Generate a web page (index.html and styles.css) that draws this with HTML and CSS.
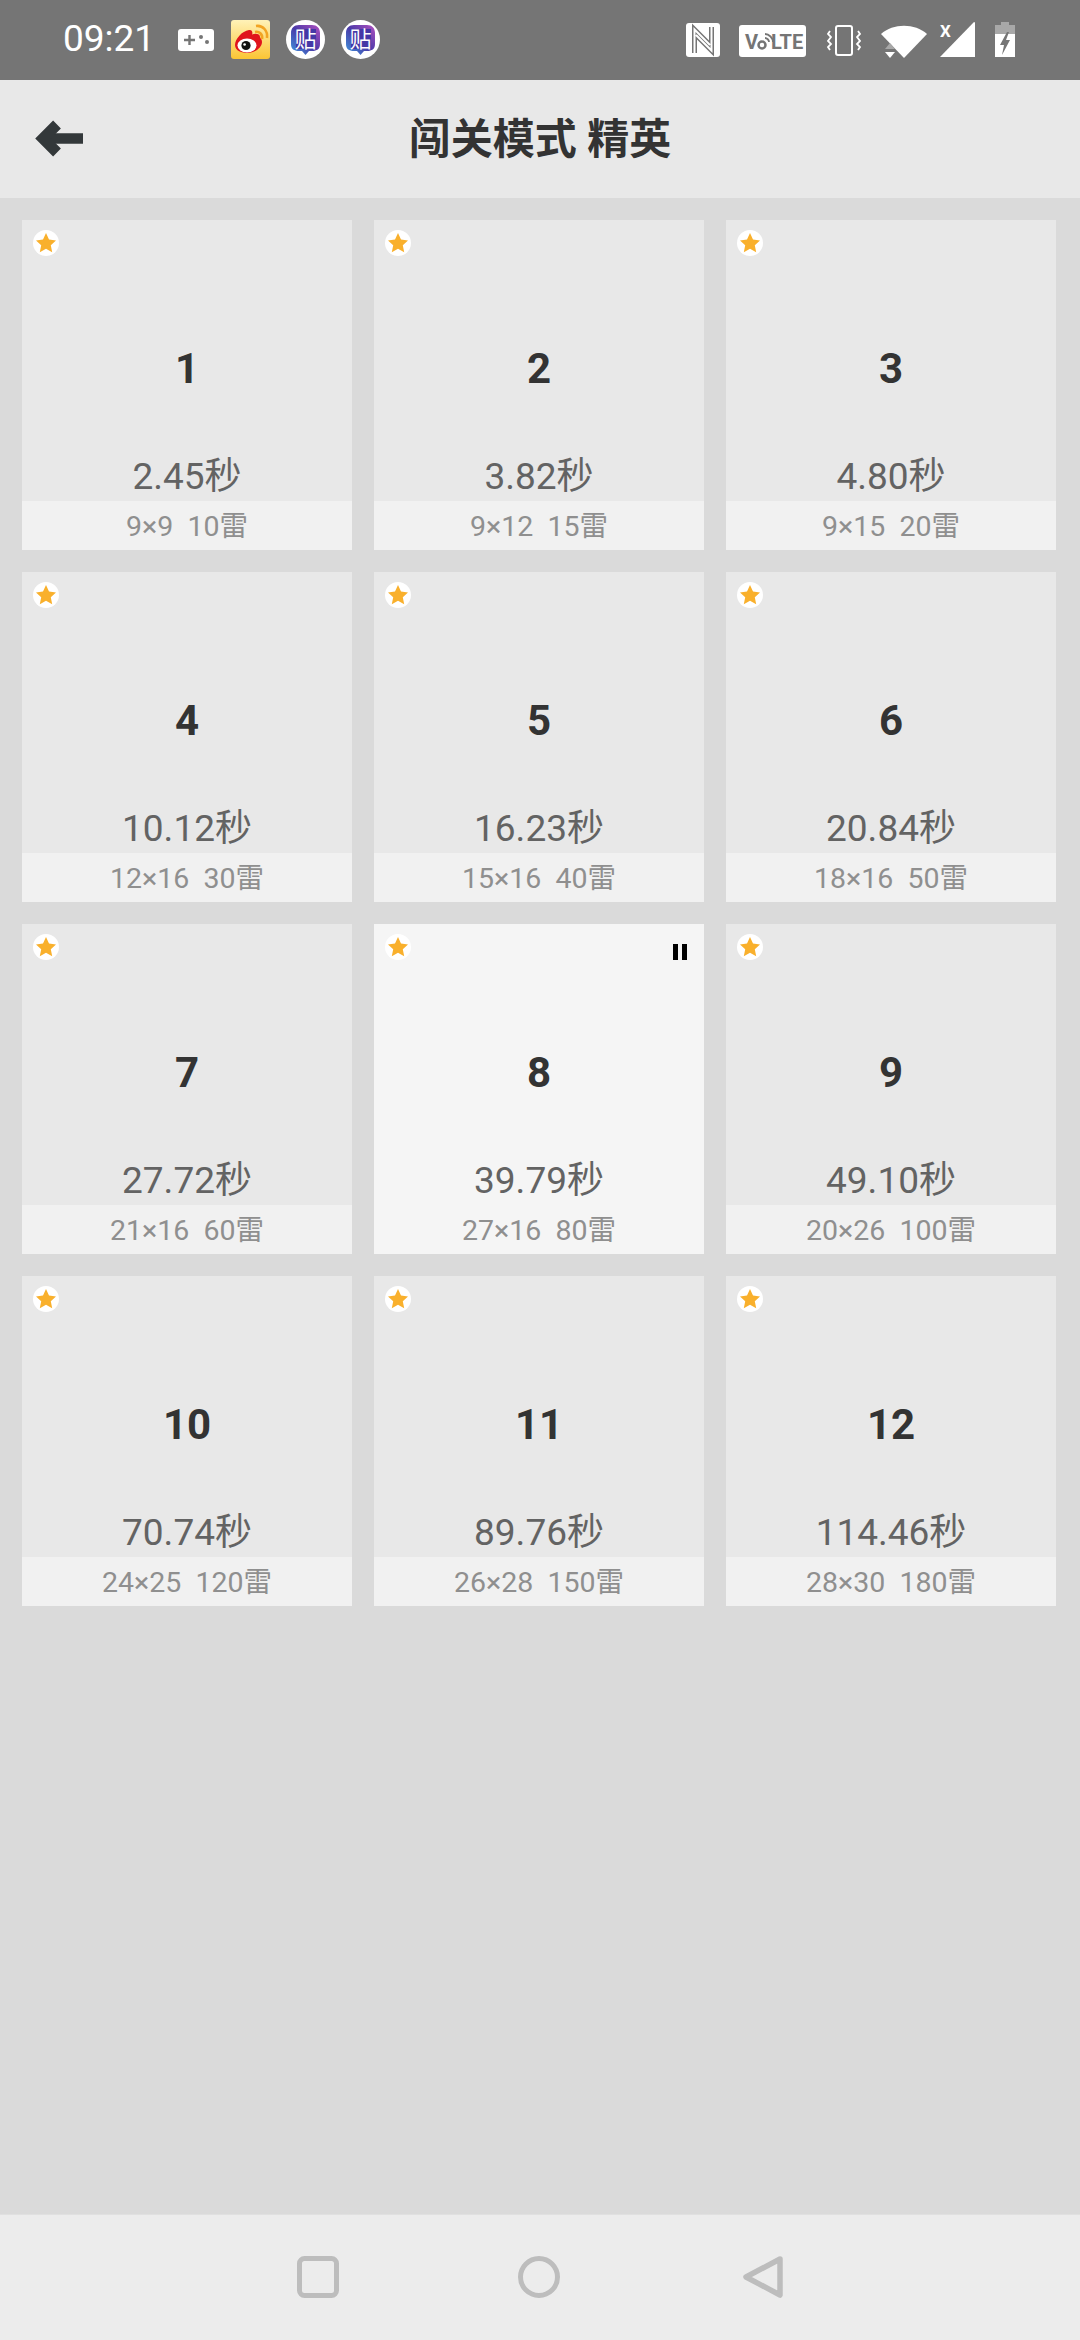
FILE: index.html
```html
<!DOCTYPE html>
<html lang="zh">
<head>
<meta charset="utf-8">
<title>闯关模式 精英</title>
<link rel="stylesheet" href="styles.css">
</head>
<body>
<div class="screen">
  <header class="status">
    <div class="status-left">
      <span class="clock">09:21</span>
      <svg class="ic-game" viewBox="0 0 36 22"><rect width="36" height="22" rx="3" fill="#fff"/><path d="M6 11h11M11.500 6v10" stroke="#757575" stroke-width="2.400"/><circle cx="23" cy="8" r="2" fill="#757575"/><circle cx="29" cy="13" r="2" fill="#757575"/></svg>
      <svg class="ic-weibo" viewBox="0 0 39 39"><defs><linearGradient id="wb" x1="0" y1="0" x2="0" y2="1"><stop offset="0" stop-color="#fff2b8"/><stop offset="1" stop-color="#fbc534"/></linearGradient></defs><rect width="39" height="39" rx="3" fill="url(#wb)"/><path d="M4 25c0-6 7-14 14-15 3-.5 4 2 3 4.500 4-1.500 8-.5 8 2.500 0 1 2 2 2 5 0 6-8 11-14 11S4 31 4 25z" fill="#e0141c"/><ellipse cx="16" cy="25.500" rx="9.500" ry="7" fill="#fff"/><circle cx="15" cy="25.500" r="4.600" fill="#111"/><circle cx="13.600" cy="24.500" r="1.300" fill="#fff"/><path d="M24 12c4-1 8 2 7 7M25 6c7-1 12 5 11 12" fill="none" stroke="#f2a423" stroke-width="2.600"/></svg>
      <svg class="ic-tie" viewBox="0 0 39 39"><defs><linearGradient id="tb" x1="0" y1="1" x2="1" y2="0"><stop offset="0" stop-color="#3f9ce0"/><stop offset=".5" stop-color="#4a3aa8"/><stop offset="1" stop-color="#b04fc0"/></linearGradient></defs><circle cx="19.500" cy="19.500" r="19.500" fill="#fff"/><path d="M13 5h13c5 0 8 3 8 8v11c0 5-3 7-8 7h-3l-3.500 4-3.500-4h-3c-5 0-8-2-8-7V13c0-5 3-8 8-8z" fill="url(#tb)"/><path d="M10 9h20v20H10z" fill="#4538a6"/><text x="19.500" y="27" class="tie-text">贴</text></svg>
      <svg class="ic-tie" viewBox="0 0 39 39"><circle cx="19.500" cy="19.500" r="19.500" fill="#fff"/><path d="M13 5h13c5 0 8 3 8 8v11c0 5-3 7-8 7h-3l-3.500 4-3.500-4h-3c-5 0-8-2-8-7V13c0-5 3-8 8-8z" fill="url(#tb)"/><path d="M10 9h20v20H10z" fill="#4538a6"/><text x="19.500" y="27" class="tie-text">贴</text></svg>
    </div>
    <div class="status-right">
      <svg class="ic-nfc" viewBox="0 0 34 34"><rect width="34" height="34" rx="3" fill="#fff"/><path d="M8.500 30V6.500L24 22M25.500 4v23.500L10 12" fill="none" stroke="#757575" stroke-width="5"/><path d="M8.500 30V6.500L24 22M25.500 4v23.500L10 12" fill="none" stroke="#fff" stroke-width="2"/></svg>
      <svg class="ic-volte" viewBox="0 0 67 32"><rect width="67" height="32" rx="3" fill="#fff"/><text x="6" y="24" class="volte-text">V</text><circle cx="23" cy="20" r="3.500" fill="none" stroke="#757575" stroke-width="2.500"/><path d="M26 13c2 0 4 2 4 4M26 9c4 0 8 4 8 8" fill="none" stroke="#757575" stroke-width="1.800"/><text x="32" y="24" class="volte-text">LTE</text></svg>
      <svg class="ic-vib" viewBox="0 0 36 31"><rect x="10" y="1" width="16" height="29" rx="2" fill="none" stroke="#fff" stroke-width="2"/><path d="M4 6l-2 3 3 3-3 4 3 3-3 3 2 3M32 6l2 3-3 3 3 4-3 3 3 3-2 3" fill="none" stroke="#fff" stroke-width="1.800"/></svg>
      <svg class="ic-wifi" viewBox="0 0 48 36"><path d="M24 35L1 11C13 0 35 0 47 11z" fill="#fff"/><path d="M5 26h10l-5-6z" fill="#a8a8a8"/><path d="M5 29h10l-5 6z" fill="#fff"/></svg>
      <svg class="ic-signal" viewBox="0 0 35 36"><path d="M34 0a1 1 0 0 1 1 1v34H0z" fill="#fff"/><text x="0" y="15" class="x-text">X</text></svg>
      <svg class="ic-batt" viewBox="0 0 20 35"><path d="M6 0h8v3h6v9H0V3h6z" fill="#a8a8a8"/><path d="M0 12h20v23H0z" fill="#fff"/><path d="M12 10L5 23h4l-2 10 8-15h-4l3-8z" fill="#757575"/></svg>
    </div>
  </header>

  <div class="appbar">
    <svg class="back" viewBox="0 0 48 38"><path d="M48 18.500H8" stroke="#33383a" stroke-width="10.500"/><path d="M22 4.500L8 18.500 22 32.500" fill="none" stroke="#33383a" stroke-width="11"/></svg>
    <h1 class="title">闯关模式 精英</h1>
  </div>

  <main class="levels">
    <section class="card"><span class="badge"><svg viewBox="0 0 26 26"><path class="star" d="M13 3l3 6.600 7 .8-5.200 4.800 1.400 7L13 18.700 6.800 22.200l1.400-7L3 10.400l7-.8z"/></svg></span><div class="body"><div class="num">1</div><div class="time">2.45秒</div></div><div class="info">9×9&nbsp;&nbsp;10雷</div></section>
    <section class="card"><span class="badge"><svg viewBox="0 0 26 26"><path class="star" d="M13 3l3 6.600 7 .8-5.200 4.800 1.400 7L13 18.700 6.800 22.200l1.400-7L3 10.400l7-.8z"/></svg></span><div class="body"><div class="num">2</div><div class="time">3.82秒</div></div><div class="info">9×12&nbsp;&nbsp;15雷</div></section>
    <section class="card"><span class="badge"><svg viewBox="0 0 26 26"><path class="star" d="M13 3l3 6.600 7 .8-5.200 4.800 1.400 7L13 18.700 6.800 22.200l1.400-7L3 10.400l7-.8z"/></svg></span><div class="body"><div class="num">3</div><div class="time">4.80秒</div></div><div class="info">9×15&nbsp;&nbsp;20雷</div></section>
    <section class="card"><span class="badge"><svg viewBox="0 0 26 26"><path class="star" d="M13 3l3 6.600 7 .8-5.200 4.800 1.400 7L13 18.700 6.800 22.200l1.400-7L3 10.400l7-.8z"/></svg></span><div class="body"><div class="num">4</div><div class="time">10.12秒</div></div><div class="info">12×16&nbsp;&nbsp;30雷</div></section>
    <section class="card"><span class="badge"><svg viewBox="0 0 26 26"><path class="star" d="M13 3l3 6.600 7 .8-5.200 4.800 1.400 7L13 18.700 6.800 22.200l1.400-7L3 10.400l7-.8z"/></svg></span><div class="body"><div class="num">5</div><div class="time">16.23秒</div></div><div class="info">15×16&nbsp;&nbsp;40雷</div></section>
    <section class="card"><span class="badge"><svg viewBox="0 0 26 26"><path class="star" d="M13 3l3 6.600 7 .8-5.200 4.800 1.400 7L13 18.700 6.800 22.200l1.400-7L3 10.400l7-.8z"/></svg></span><div class="body"><div class="num">6</div><div class="time">20.84秒</div></div><div class="info">18×16&nbsp;&nbsp;50雷</div></section>
    <section class="card"><span class="badge"><svg viewBox="0 0 26 26"><path class="star" d="M13 3l3 6.600 7 .8-5.200 4.800 1.400 7L13 18.700 6.800 22.200l1.400-7L3 10.400l7-.8z"/></svg></span><div class="body"><div class="num">7</div><div class="time">27.72秒</div></div><div class="info">21×16&nbsp;&nbsp;60雷</div></section>
    <section class="card current"><span class="badge"><svg viewBox="0 0 26 26"><path class="star" d="M13 3l3 6.600 7 .8-5.200 4.800 1.400 7L13 18.700 6.800 22.200l1.400-7L3 10.400l7-.8z"/></svg></span><span class="pause"></span><div class="body"><div class="num">8</div><div class="time">39.79秒</div></div><div class="info">27×16&nbsp;&nbsp;80雷</div></section>
    <section class="card"><span class="badge"><svg viewBox="0 0 26 26"><path class="star" d="M13 3l3 6.600 7 .8-5.200 4.800 1.400 7L13 18.700 6.800 22.200l1.400-7L3 10.400l7-.8z"/></svg></span><div class="body"><div class="num">9</div><div class="time">49.10秒</div></div><div class="info">20×26&nbsp;&nbsp;100雷</div></section>
    <section class="card"><span class="badge"><svg viewBox="0 0 26 26"><path class="star" d="M13 3l3 6.600 7 .8-5.200 4.800 1.400 7L13 18.700 6.800 22.200l1.400-7L3 10.400l7-.8z"/></svg></span><div class="body"><div class="num">10</div><div class="time">70.74秒</div></div><div class="info">24×25&nbsp;&nbsp;120雷</div></section>
    <section class="card"><span class="badge"><svg viewBox="0 0 26 26"><path class="star" d="M13 3l3 6.600 7 .8-5.200 4.800 1.400 7L13 18.700 6.800 22.200l1.400-7L3 10.400l7-.8z"/></svg></span><div class="body"><div class="num">11</div><div class="time">89.76秒</div></div><div class="info">26×28&nbsp;&nbsp;150雷</div></section>
    <section class="card"><span class="badge"><svg viewBox="0 0 26 26"><path class="star" d="M13 3l3 6.600 7 .8-5.200 4.800 1.400 7L13 18.700 6.800 22.200l1.400-7L3 10.400l7-.8z"/></svg></span><div class="body"><div class="num">12</div><div class="time">114.46秒</div></div><div class="info">28×30&nbsp;&nbsp;180雷</div></section>
  </main>

  <nav class="navbar">
    <svg class="nav-ic" viewBox="0 0 42 42"><rect x="2.500" y="2.500" width="37" height="37" rx="5" fill="none" stroke="#bdbdbd" stroke-width="5"/></svg>
    <svg class="nav-ic" viewBox="0 0 42 42"><circle cx="21" cy="21" r="18.500" fill="none" stroke="#bdbdbd" stroke-width="5"/></svg>
    <svg class="nav-ic tri" viewBox="0 0 42 42"><path d="M38 3L4 21 38 39z" fill="none" stroke="#bdbdbd" stroke-width="5.500" stroke-linejoin="round"/></svg>
  </nav>
</div>
</body>
</html>
```
FILE: styles.css
```css
* { box-sizing: border-box; }
html, body { margin: 0; padding: 0; }
body { font-family: Roboto, "Noto Sans CJK SC", sans-serif; background: #dadada; }
.screen { width: 1080px; height: 2340px; display: flex; flex-direction: column; overflow: hidden; }

.status { height: 80px; flex: none; background: #757575; display: flex; align-items: flex-start; justify-content: space-between; padding: 0 65px 0 63px; }
.status svg { display: block; flex: none; }
.status-left, .status-right { display: flex; align-items: flex-start; }
.clock { color: #fff; font-size: 37px; line-height: 42px; margin-top: 18px; width: 90px; white-space: nowrap; }
.ic-game { width: 36px; height: 22px; margin: 29px 0 0 25px; }
.ic-weibo { width: 39px; height: 39px; margin: 20px 0 0 17px; }
.ic-tie { width: 39px; height: 39px; margin: 20px 0 0 16px; }
.tie-text { font-family: "Noto Sans CJK SC", sans-serif; font-size: 22px; fill: #fff; text-anchor: middle; }
.ic-nfc { width: 34px; height: 34px; margin: 23px 0 0 0; }
.ic-volte { width: 67px; height: 32px; margin: 25px 0 0 19px; }
.volte-text { font-family: Roboto, sans-serif; font-size: 20px; font-weight: 700; fill: #757575; }
.ic-vib { width: 36px; height: 31px; margin: 25px 0 0 20px; }
.ic-wifi { width: 48px; height: 36px; margin: 23px 0 0 18px; }
.ic-signal { width: 35px; height: 36px; margin: 22px 0 0 12px; }
.x-text { font-family: Roboto, sans-serif; font-size: 17px; font-weight: 700; fill: #fff; }
.ic-batt { width: 20px; height: 35px; margin: 22px 0 0 20px; }

.appbar { height: 118px; flex: none; background: #e8e8e8; display: flex; align-items: center; justify-content: center; position: relative; }
.back { position: absolute; left: 35px; top: 40px; width: 48px; height: 38px; }
.title { margin: 0; font-size: 42px; font-weight: 700; color: #333; line-height: 56px; position: relative; top: 1px; }

.levels { flex: 1; display: grid; grid-template-columns: repeat(3, 330px); grid-auto-rows: 330px; gap: 22px; padding: 22px; align-content: start; }
.card { position: relative; background: #e8e8e8; display: flex; flex-direction: column; text-align: center; }
.card.current { background: #f5f5f5; }
.body { flex: 1; display: flex; flex-direction: column; justify-content: space-between; padding-top: 124px; }
.num { font-size: 42px; font-weight: 700; color: #333; line-height: 50px; }
.time { font-size: 37px; color: #636363; line-height: 50px; position: relative; top: 1px; }
.info { height: 49px; background: #f1f1f1; font-size: 28.5px; color: #8f8f8f; line-height: 51px; white-space: nowrap; }
.current .info { background: transparent; }
.badge { position: absolute; left: 11px; top: 10px; width: 26px; height: 26px; border-radius: 50%; background: #fff; }
.badge svg { display: block; width: 26px; height: 26px; }
.star { fill: #f9b02c; }
.pause { position: absolute; right: 17px; top: 20px; width: 14px; height: 16px; border-left: 5px solid #000; border-right: 5px solid #000; }

.navbar { height: 126px; flex: none; background: #ececec; border-top: 1px solid #e0e0e0; display: flex; justify-content: center; gap: 179px; padding-top: 41px; }
.nav-ic { width: 42px; height: 42px; display: block; }
.tri { margin-left: 3px; }
```
